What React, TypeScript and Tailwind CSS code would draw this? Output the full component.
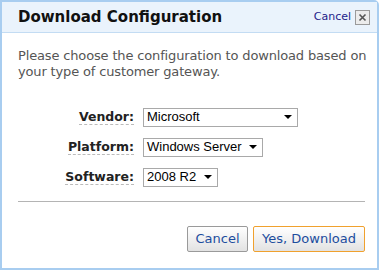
import { useState } from 'react';

const vendors = ['Microsoft'];
const platforms = ['Windows Server'];
const softwares = ['2008 R2'];

function Campo({ label, value, ancho }: { label: string; value: string; ancho: string }) {
  return (
    <div className="flex items-center h-[30px]">
      <div className="w-[125px] flex justify-end pr-[9px]">
        <span className="font-bold text-[12.5px] text-[#222] border-b border-dashed border-[#bbb] leading-[15px]">{label}</span>
      </div>
      <div className={`${ancho} h-[19px] border border-[#a9a9a9] bg-white flex items-center justify-between pl-[3px] pr-[5px]`}>
        <span className="text-[13px] text-black" style={{ fontFamily: '"Liberation Sans", Arial, sans-serif' }}>{value}</span>
        <span className="w-0 h-0 border-l-[4px] border-r-[4px] border-t-[4px] border-l-transparent border-r-transparent border-t-black" />
      </div>
    </div>
  );
}

export default function App() {
  const [vendor] = useState(vendors[0]);
  const [platform] = useState(platforms[0]);
  const [software] = useState(softwares[0]);

  return (
    <div className="w-[381px] h-[270px] bg-white" style={{ fontFamily: '"DejaVu Sans", Verdana, sans-serif' }}>
      <div className="w-[379px] h-[270px] border-2 border-[#a8cdf0] rounded-tr-[5px] flex flex-col">
        <div className="h-[31px] bg-[#eaf3fc] border-b border-[#c3dcf3] flex items-center pl-[16px] pr-[7px] shrink-0">
          <h1 className="font-bold text-[15px] text-[#111] flex-1 pt-[1px]">Download Configuration</h1>
          <a className="text-[11px] text-[#1d1d8a] mr-[4px] cursor-pointer">Cancel</a>
          <button className="w-[15px] h-[15px] border border-[#9a9a9a] bg-[#ececec] flex items-center justify-center text-[#555]">
            <svg width="9" height="9" viewBox="0 0 9 9">
              <path d="M1.5 1.5 L7.5 7.5 M7.5 1.5 L1.5 7.5" stroke="#555" strokeWidth="1.6" />
            </svg>
          </button>
        </div>
        <div className="flex-1 pl-[16px] pr-[10px] pt-[15px]">
          <p className="text-[13px] leading-[16px] text-[#555] tracking-[-0.15px]">
            Please choose the configuration to download based on your type of customer gateway.
          </p>
          <div className="mt-[22px]">
            <Campo label="Vendor:" value={vendor} ancho="w-[155px]" />
            <Campo label="Platform:" value={platform} ancho="w-[120px]" />
            <Campo label="Software:" value={software} ancho="w-[75px]" />
          </div>
          <div className="border-t border-[#b4b4b4] mt-[9px] mr-[2px]" />
          <div className="flex justify-end gap-[5px] mt-[24px] pr-[2px]">
            <button className="h-[26px] w-[61px] border border-[#9a9a9a] rounded-[2px] bg-gradient-to-b from-white to-[#e2e2e2] text-[13px] text-[#1c4d9e]">
              Cancel
            </button>
            <button className="h-[26px] w-[112px] border border-[#f0a12e] rounded-[2px] bg-gradient-to-b from-white to-[#e2e2e2] text-[13px] text-[#1c4d9e]">
              Yes, Download
            </button>
          </div>
        </div>
      </div>
    </div>
  );
}
